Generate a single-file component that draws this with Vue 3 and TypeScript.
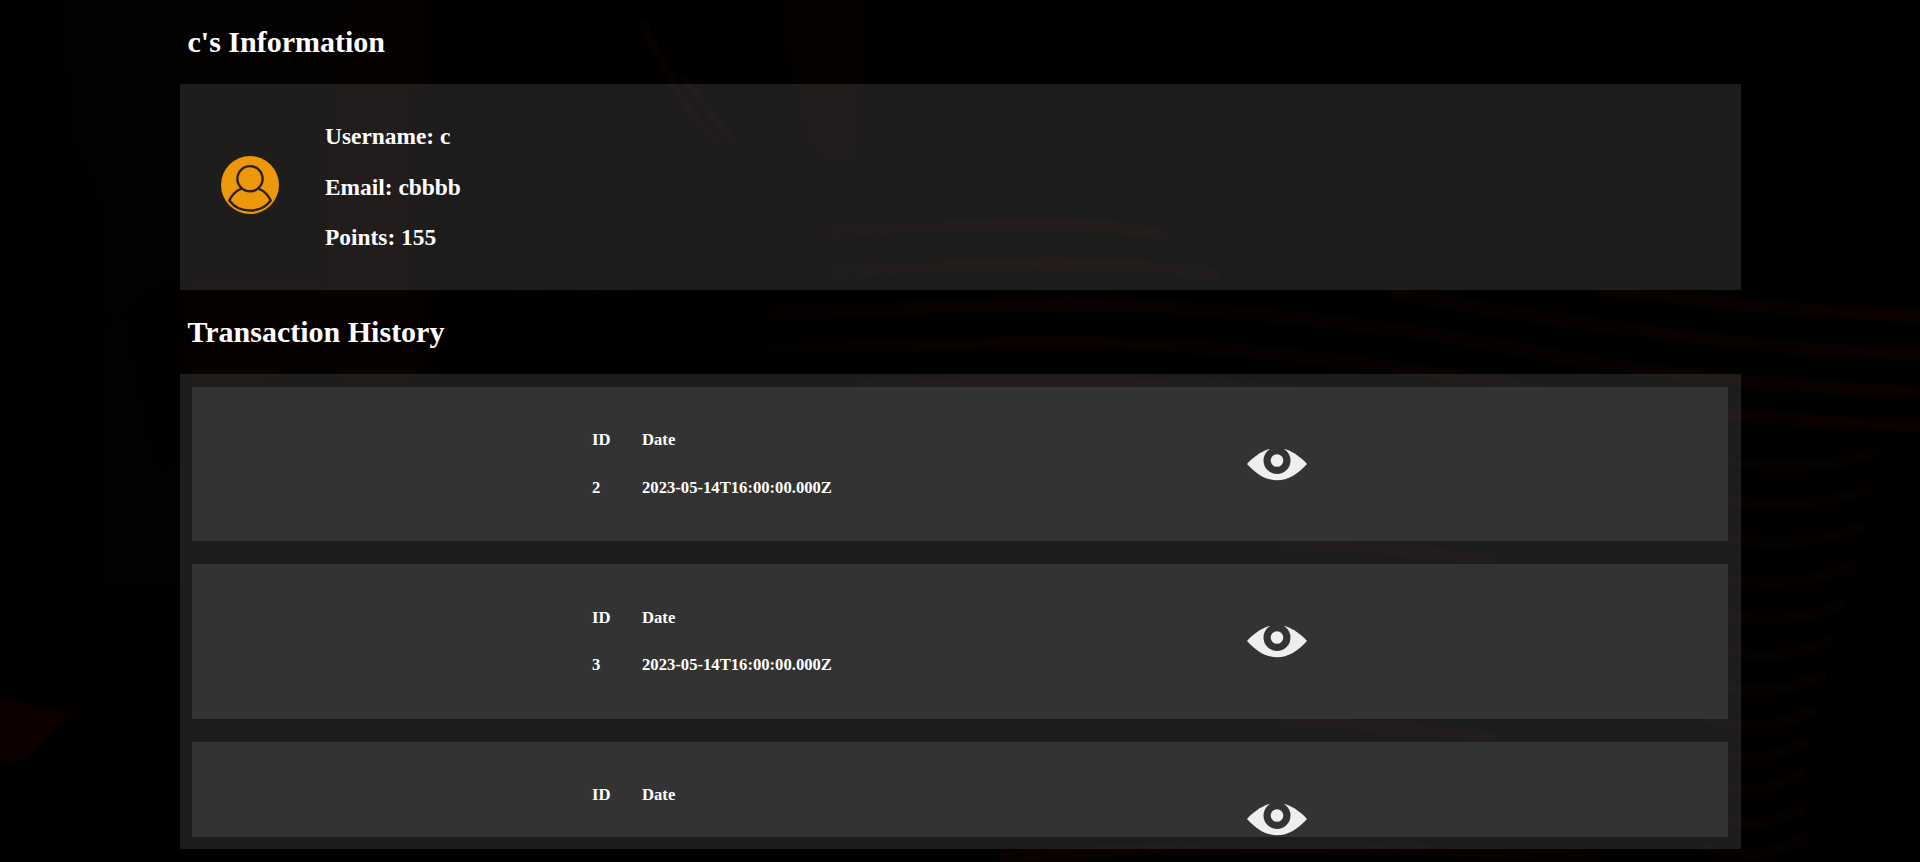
<script setup lang="ts">
interface Transaction {
  key: number
  id?: number
  date?: string
}

const user = { username: 'c', email: 'cbbbb', points: 155 }

const transactions: Transaction[] = [
  { key: 1, id: 2, date: '2023-05-14T16:00:00.000Z' },
  { key: 2, id: 3, date: '2023-05-14T16:00:00.000Z' },
  { key: 3 },
]

// Long contour lines of the backdrop
const waves: string[] = [
  'M700 240C790 236 900 225 1020 225S1120 229 1170 236',
  'M700 280C790 276 930 264 1040 264S1170 268 1220 276',
  'M700 314C800 314 980 304 1080 304S1400 326 1513 348S1740 386 1920 392',
  'M700 350C800 350 960 343 1060 343S1240 348 1390 367S1640 416 1920 426',
  'M1390 293C1470 306 1540 318 1627 329S1810 352 1920 354',
  'M1600 290C1700 301 1800 312 1920 316',
  'M760 388C900 383 1140 378 1300 390',
  'M1280 543C1360 545 1430 552 1500 562',
  'M1280 720C1360 723 1430 730 1500 740',
  'M1000 858C1150 845 1450 845 1600 860',
]

// Short ripples at the right edge, curling upward
const ripples: string[] = [464, 502, 540, 580, 617, 653, 688, 723, 755, 787, 821, 852].map((y, i) => {
  const end = 1880 - Math.min(i * 9, 75)
  return `M1700 ${y - 5}C1760 ${y + 4} ${end - 50} ${y + 8} ${end} ${y - 14}`
})

const arcs: string[] = Array.from({ length: 7 }, (_, i) => {
  const x = 430 + i * 6
  const y = 20 + i * 34
  return `M${x} ${y}Q${x + 20} ${y + 75} ${x + 170} ${y + 110}`
})
</script>

<template>
  <div class="page">
    <svg class="backdrop" viewBox="0 0 1920 862" aria-hidden="true">
      <defs>
        <filter id="soft" x="-20%" y="-20%" width="140%" height="140%" color-interpolation-filters="sRGB">
          <feGaussianBlur stdDeviation="9" />
        </filter>
        <filter id="fine" color-interpolation-filters="sRGB"><feGaussianBlur stdDeviation="2.5" /></filter>
        <linearGradient id="glow" gradientUnits="userSpaceOnUse" x1="660" y1="0" x2="1920" y2="0">
          <stop offset="0" stop-color="#000" />
          <stop offset=".18" stop-color="#070200" />
          <stop offset=".32" stop-color="#0b0200" />
          <stop offset=".42" stop-color="#070200" />
          <stop offset=".75" stop-color="#070200" />
          <stop offset="1" stop-color="#0b0100" />
        </linearGradient>
      </defs>
      <g filter="url(#soft)">
        <path d="M60 0H430V350L400 590H105V210L70 130Z" fill="#040200" />
        <path d="M360 0H415V370H340V170Z" fill="#070100" />
        <path d="M190 290H320V340L260 370H190Z" fill="#070100" />
        <path d="M125 310L180 270V470H155Z" fill="#000" />
        <path d="M780 0H863V160Q830 180 800 140Z" fill="#050200" />
        <path d="M0 785L180 770L440 850V862H0Z" fill="#030100" />
      </g>
      <g filter="url(#fine)">
        <path d="M0 698L75 714L20 762H0Z" fill="#0d0000" />
        <path d="M642 22L682 100L718 145M682 75L720 125L738 145" class="ray" />
        <path v-for="d in arcs" :key="d" :d="d" class="arc" />
        <path v-for="d in waves" :key="d" :d="d" class="wave" />
        <path v-for="d in ripples" :key="d" :d="d" class="ripple" />
      </g>
    </svg>

    <main class="content">
      <h2>{{ user.username }}'s Information</h2>
      <section class="panel profile">
        <svg class="avatar" viewBox="0 0 58 58">
          <circle cx="29" cy="29" r="29" fill="#ed970a" />
          <g fill="none" stroke="#2a2118" stroke-width="2.4" stroke-linejoin="round">
            <path d="M20.500 32.500C15 35 10.500 39.500 8.300 44.500C13 51 20 54.500 29 54.500S45 51 49.700 44.500C47.500 39.500 43 35 37.500 32.500" />
            <circle cx="29" cy="22.700" r="12.600" />
          </g>
        </svg>
        <div class="details">
          <h3>Username: {{ user.username }}</h3>
          <h3>Email: {{ user.email }}</h3>
          <h3>Points: {{ user.points }}</h3>
        </div>
      </section>

      <h2>Transaction History</h2>
      <section class="panel history">
        <div class="list">
          <article v-for="item in transactions" :key="item.key" class="card">
            <div class="fields">
              <h5>ID</h5>
              <h5>Date</h5>
              <template v-if="item.id">
                <h5>{{ item.id }}</h5>
                <h5>{{ item.date }}</h5>
              </template>
            </div>
            <svg class="eye" viewBox="0 0 60 32">
              <path
                d="M0 14.900C6 8.500 13 3 22 0H38C47 3 54 8.500 60 14.900C51 25 41 31.200 30 31.200S9 25 0 14.900Z"
                fill="#eee"
              />
              <circle cx="30" cy="11.500" r="13.500" fill="#333" />
              <circle cx="30" cy="11.500" r="6.300" fill="#eee" />
            </svg>
          </article>
        </div>
      </section>
    </main>
  </div>
</template>

<style>
body {
  margin: 0;
  background: #000;
}
</style>

<style scoped>
.page {
  position: relative;
  height: 862px;
  overflow: hidden;
  background: #000;
  color: #fff;
  font-family: 'Liberation Serif', 'Times New Roman', serif;
  font-size: 20px;
}

.backdrop {
  position: absolute;
  inset: 0;
  width: 100%;
  height: 100%;
}

.wave,
.ripple,
.ray,
.arc {
  fill: none;
  stroke: url(#glow);
  stroke-width: 13;
}

.ripple {
  stroke: #070200;
  stroke-width: 10;
}

.ray {
  stroke: #0b0300;
  stroke-width: 6;
}

.arc {
  stroke: #040200;
  stroke-width: 5;
}

.content {
  position: relative;
  width: 1561px;
  margin-left: 180px;
}

h2,
h3,
h5 {
  margin: 0;
  font-weight: bold;
}

h2 {
  height: 84px;
  padding-left: 7.500px;
  font-size: 30px;
  line-height: 84px;
}

h3 {
  font-size: 23.400px;
  line-height: 27px;
}

h5 {
  font-size: 16.650px;
  line-height: 20px;
}

.panel {
  box-sizing: border-box;
  background: rgba(255, 255, 255, 0.108);
}

.profile {
  display: flex;
  align-items: center;
  gap: 46px;
  height: 206px;
  padding-left: 41px;
}

.avatar {
  width: 58px;
  height: 58px;
  margin-top: -4px;
}

.details {
  display: grid;
  gap: 23.800px;
}

.history {
  height: 475px;
  padding: 13px 13px 12px 12px;
}

.list {
  display: flex;
  flex-direction: column;
  gap: 23.150px;
  height: 450px;
  overflow: hidden;
}

.card {
  display: flex;
  flex: none;
  box-sizing: border-box;
  height: 154.300px;
  padding-left: 400px;
  background: #333;
}

.fields {
  display: grid;
  grid-template-columns: 50px 605px;
  grid-template-rows: 20px 20px;
  row-gap: 27.400px;
  padding-top: 43.200px;
}

.eye {
  width: 60px;
  height: 32px;
  margin-top: 62px;
}
</style>
